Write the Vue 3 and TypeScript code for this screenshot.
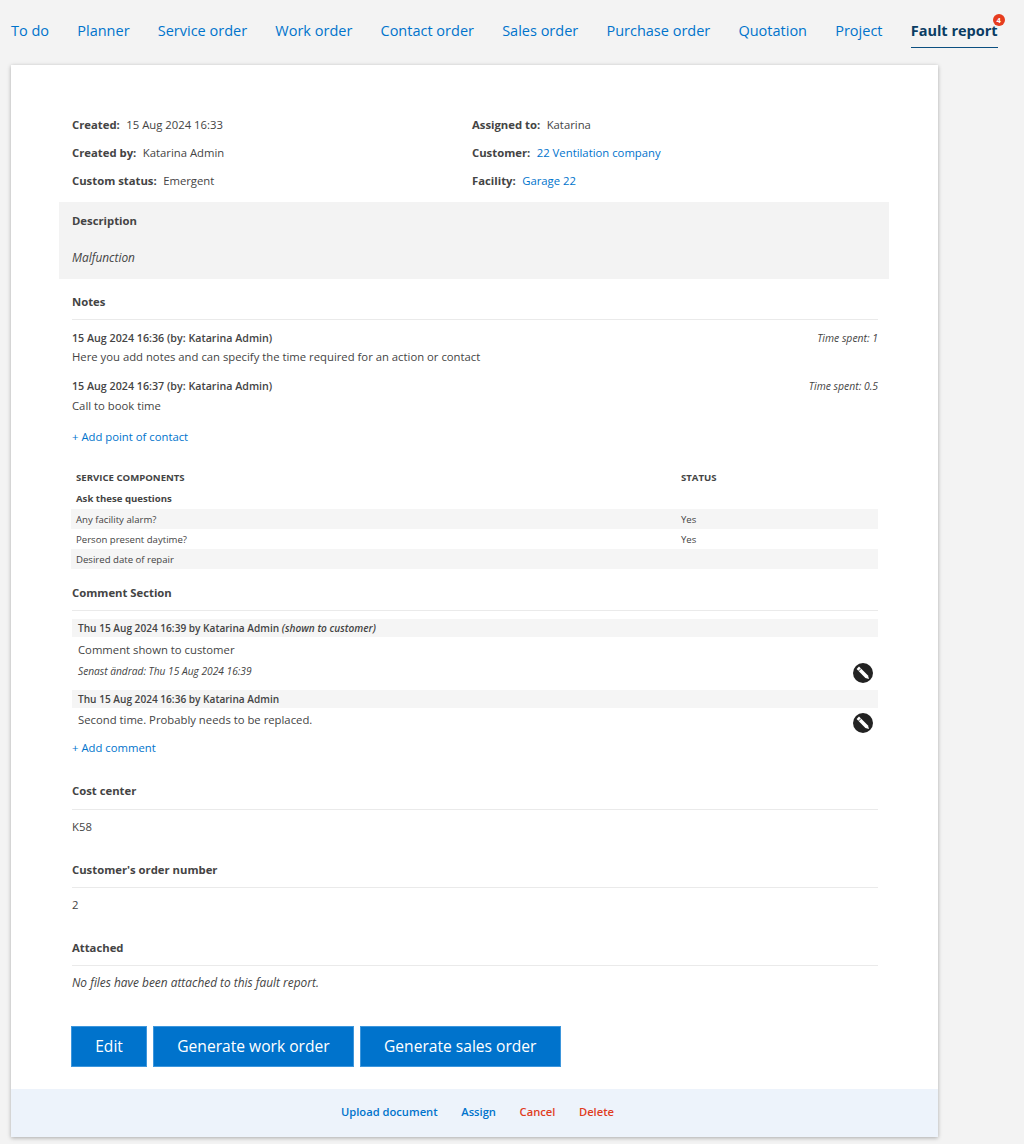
<script setup lang="ts">
const tabs = ['To do','Planner','Service order','Work order','Contact order','Sales order','Purchase order','Quotation','Project']
const left = [
  { k: 'Created:', v: '15 Aug 2024 16:33' },
  { k: 'Created by:', v: 'Katarina Admin' },
  { k: 'Custom status:', v: 'Emergent' },
]
const right = [
  { k: 'Assigned to:', v: 'Katarina', link: false },
  { k: 'Customer:', v: '22 Ventilation company', link: true },
  { k: 'Facility:', v: 'Garage 22', link: true },
]
const notes = [
  { h: '15 Aug 2024 16:36 (by: Katarina Admin)', t: 'Time spent: 1', b: 'Here you add notes and can specify the time required for an action or contact' },
  { h: '15 Aug 2024 16:37 (by: Katarina Admin)', t: 'Time spent: 0.5', b: 'Call to book time' },
]
const rows = [
  { q: 'Any facility alarm?', s: 'Yes' },
  { q: 'Person present daytime?', s: 'Yes' },
  { q: 'Desired date of repair', s: '' },
]
</script>

<template>
  <div class="page">
    <nav class="tabs">
      <a v-for="t in tabs" :key="t" class="tab">{{ t }}</a>
      <a class="tab active"><span>Fault report</span><span class="badge">4</span></a>
    </nav>
    <main class="card">
      <div class="body">
        <div class="meta">
          <div class="meta-col">
            <div v-for="m in left" :key="m.k" class="meta-row"><b>{{ m.k }}</b><span>{{ m.v }}</span></div>
          </div>
          <div class="meta-col">
            <div v-for="m in right" :key="m.k" class="meta-row"><b>{{ m.k }}</b><span :class="{ link: m.link }">{{ m.v }}</span></div>
          </div>
        </div>
        <section class="desc">
          <h3>Description</h3>
          <p><i>Malfunction</i></p>
        </section>
        <h3 class="title notes-title">Notes</h3>
        <div v-for="n in notes" :key="n.h" class="note">
          <div class="note-head"><b>{{ n.h }}</b><i>{{ n.t }}</i></div>
          <div class="note-body">{{ n.b }}</div>
        </div>
        <a class="link add add-contact">+ Add point of contact</a>
        <table class="svc">
          <thead>
            <tr><th>SERVICE COMPONENTS</th><th class="st">STATUS</th></tr>
          </thead>
          <tbody>
            <tr><td colspan="2" class="ask"><b>Ask these questions</b></td></tr>
            <tr v-for="r in rows" :key="r.q" class="zebra"><td>{{ r.q }}</td><td class="st">{{ r.s }}</td></tr>
          </tbody>
        </table>
        <h3 class="title comment-title">Comment Section</h3>
        <div class="comment first">
          <div class="c-head"><b>Thu 15 Aug 2024 16:39 by Katarina Admin <i>(shown to customer)</i></b></div>
          <div class="c-main">
            <div>
              <div class="c-text">Comment shown to customer</div>
              <div class="c-edit">Senast ändrad: Thu 15 Aug 2024 16:39</div>
            </div>
            <svg class="pen pen-a" viewBox="0 0 20 20" aria-hidden="true">
              <circle cx="10" cy="10" r="10" fill="#222" />
              <path d="M3.6 6 6 3.6 15 12.4 16 16 12.4 15Z" fill="#fff" />
              <path d="M5.4 8.2 8.2 5.4" stroke="#222" stroke-width=".8" />
            </svg>
          </div>
        </div>
        <div class="comment">
          <div class="c-head"><b>Thu 15 Aug 2024 16:36 by Katarina Admin</b></div>
          <div class="c-main second">
            <div class="c-text">Second time. Probably needs to be replaced.</div>
            <svg class="pen pen-b" viewBox="0 0 20 20" aria-hidden="true">
              <circle cx="10" cy="10" r="10" fill="#222" />
              <path d="M3.6 6 6 3.6 15 12.4 16 16 12.4 15Z" fill="#fff" />
              <path d="M5.4 8.2 8.2 5.4" stroke="#222" stroke-width=".8" />
            </svg>
          </div>
        </div>
        <a class="link add add-comment">+ Add comment</a>
        <h3 class="title cost-title">Cost center</h3>
        <p class="value">K58</p>
        <h3 class="title order-title">Customer's order number</h3>
        <p class="value">2</p>
        <h3 class="title att-title">Attached</h3>
        <p class="value none"><i>No files have been attached to this fault report.</i></p>
        <div class="buttons">
          <button class="btn">Edit</button>
          <button class="btn">Generate work order</button>
          <button class="btn">Generate sales order</button>
        </div>
      </div>
      <footer class="foot">
        <a class="blue">Upload document</a>
        <a class="blue">Assign</a>
        <a class="red">Cancel</a>
        <a class="red">Delete</a>
      </footer>
    </main>
  </div>
</template>

<style>
html, body { background: #f3f3f3; }
</style>

<style scoped>
.page {
  width: 1024px;
  height: 1144px;
  overflow: hidden;
  background: #f3f3f3;
  font-family: "Open Sans", sans-serif;
  color: #444;
  font-size: 11.3px;
  box-sizing: border-box;
  padding: 0 0 0 11px;
}
.tabs { display: flex; gap: 28.2px; height: 65px; padding-top: 20px; box-sizing: border-box; font-size: 14.5px; line-height: 22px; color: #0073cc; }
.tab { position: relative; height: 27px; }
.tab.active { color: #0b3c63; font-weight: 700; border-bottom: 1px solid #0b4f80; }
.badge { position: absolute; top: -6px; left: calc(100% - 5px); width: 12px; height: 12px; border-radius: 50%; background: #e63c1e; color: #fff; font-size: 7.5px; line-height: 12px; font-weight: 700; text-align: center; }
.card { width: 927px; height: 1072px; background: #fff; box-shadow: 0 1px 4px rgba(0,0,0,.3); display: flex; flex-direction: column; }
.body { flex: 1; padding: 52px 60px 0 61px; }
h3 { margin: 0; font-size: 11.3px; line-height: 16px; font-weight: 700; color: #444; }
p { margin: 0; }
.meta { display: flex; }
.meta-col { width: 400px; display: flex; flex-direction: column; gap: 12px; }
.meta-row { display: flex; gap: 6.5px; line-height: 16px; height: 16px; }
.link { color: #0073cc; }
.desc { margin: 13px 0 0 -13px; width: 830px; height: 77px; background: #f3f3f3; padding: 11px 13px; box-sizing: border-box; }
.desc p { margin-top: 20px; line-height: 16px; font-size: 11.9px; }
.title { border-bottom: 1px solid #eaeaea; padding-bottom: 9px; width: 806px; }
.notes-title { margin-top: 15px; }
.note { width: 806px; }
.note-head { display: flex; justify-content: space-between; line-height: 16px; padding-top: 10px; font-size: 10.7px; }
.note-head b { font-weight: 600; }
.note + .note .note-head { padding-top: 13px; }
.note-head i { font-size: 10.4px; }
.note-body { line-height: 16px; margin-top: 3px; }
.note + .note .note-body { margin-top: 4px; }
.add { display: block; line-height: 16px; }
.add-contact { margin-top: 15px; }
.svc { width: 807px; margin: 22px 0 0 -1px; border-collapse: collapse; font-size: 9.6px; table-layout: fixed; }
.svc th { text-align: left; font-weight: 700; padding: 0 5px; height: 21px; }
.svc td { padding: 0 5px; height: 20px; }
.svc td.ask { height: 21px; }
.svc .st { width: 192px; }
.zebra:nth-child(even) td { background: #f5f5f5; }
.comment-title { margin-top: 16px; }
.comment { width: 806px; }
.first { margin-top: 8px; }
.c-head { background: #f5f5f5; height: 18px; line-height: 18px; padding-left: 6px; font-size: 10.1px; }
.c-head b { font-weight: 600; }
.c-main { position: relative; padding-left: 6px; }
.c-text { line-height: 16px; padding-top: 5px; }
.second { height: 32px; }
.second .c-text { padding-top: 4px; }
.c-edit { font-style: italic; font-size: 10.2px; line-height: 14px; margin-top: 6px; padding-bottom: 12px; }
.pen { position: absolute; right: 5px; width: 20px; height: 20px; }
.pen-a { top: 26px; }
.pen-b { top: 5px; }
.cost-title { margin-top: 27px; padding-bottom: 10px; }
.order-title { margin-top: 27px; }
.att-title { margin-top: 27px; }
.value { line-height: 16px; margin-top: 9px; }
.none { margin-top: 8px; font-size: 11.9px; }
.buttons { display: flex; gap: 6px; margin-top: 36px; margin-left: -1px; }
.btn { height: 41px; padding: 0 23.2px 2px; border: 1px solid #3d96dc; background: #0073cc; color: #fff; font: 400 15.6px "Open Sans", sans-serif; }
.foot { height: 48px; box-sizing: border-box; padding: 0 0 4px 6px; background: #edf3fb; display: flex; justify-content: center; align-items: center; gap: 23.6px; font-size: 11.2px; font-weight: 600; }
.blue { color: #0073cc; }
.red { color: #e03c1e; }
</style>
